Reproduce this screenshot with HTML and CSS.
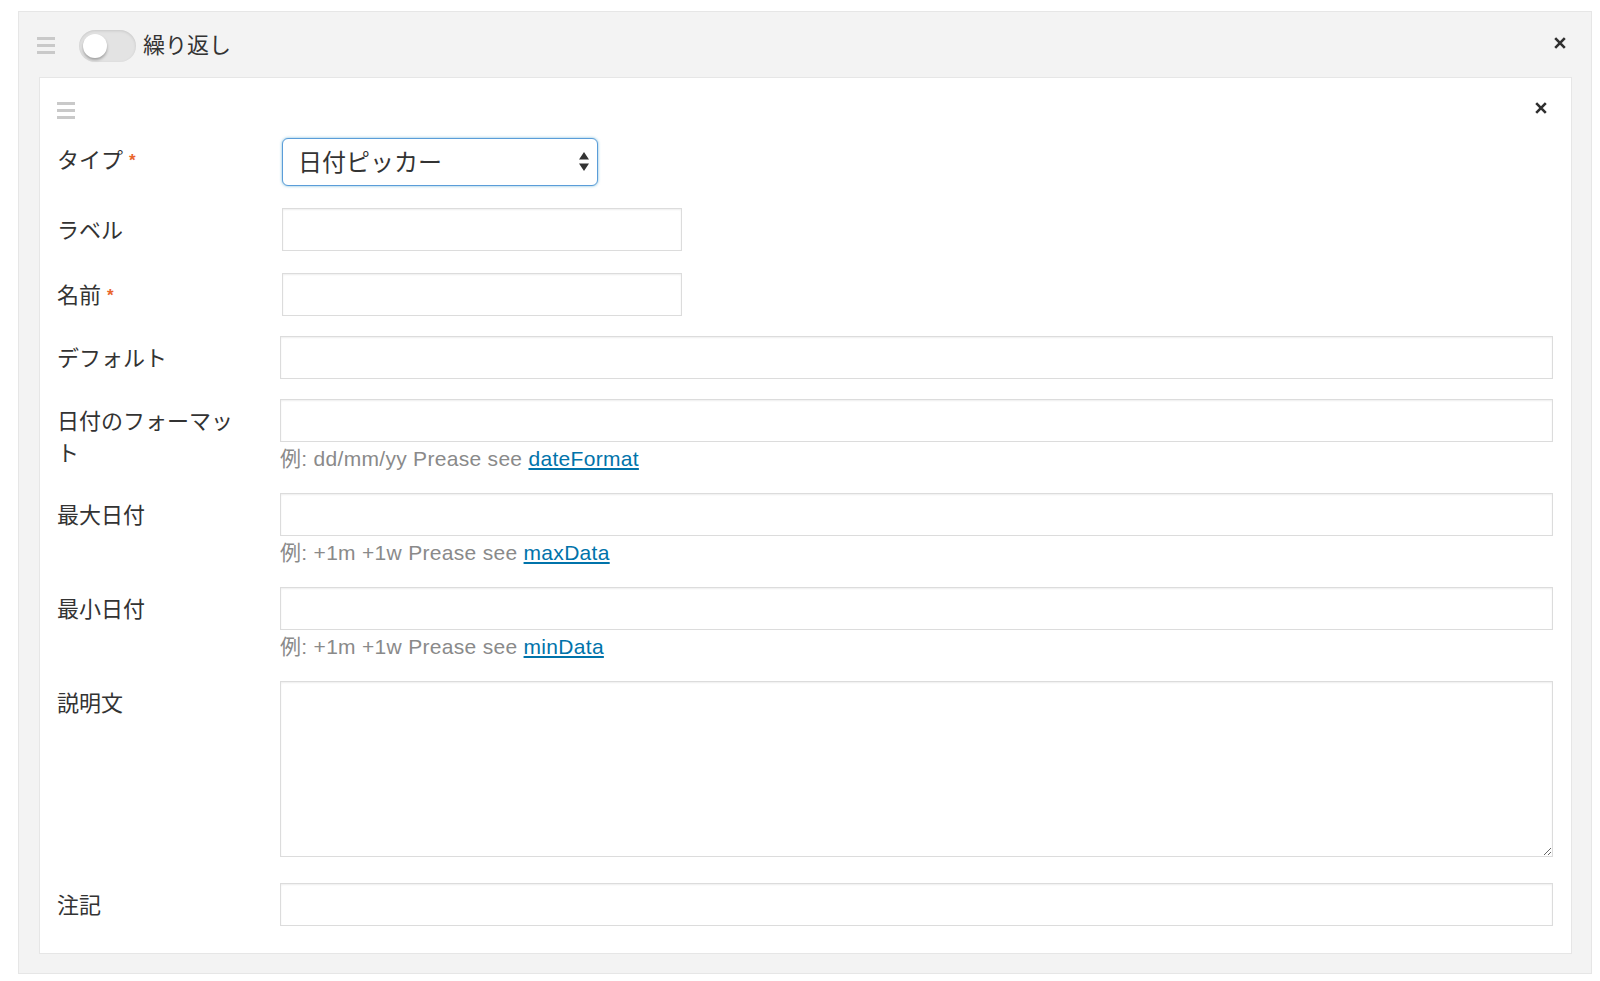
FILE: index.html
```html
<!DOCTYPE html>
<html lang="ja">
<head>
<meta charset="utf-8">
<title>繰り返し</title>
<link rel="stylesheet" href="styles.css">
</head>
<body>
<div class="repeater">
  <div class="repeater-head">
    <svg class="handle" viewBox="0 0 18 17" width="18" height="17"><rect x="0" y="0" width="18" height="3"/><rect x="0" y="7" width="18" height="3"/><rect x="0" y="14" width="18" height="3"/></svg>
    <span class="switch"><span class="switch-knob"></span></span>
    <span class="repeater-title">繰り返し</span>
    <button class="close" type="button"><svg viewBox="0 0 12 12" width="12" height="12"><path d="M1.2 1.2 L10.8 10.8 M10.8 1.2 L1.2 10.8"/></svg></button>
  </div>
  <div class="field">
    <div class="field-head">
      <svg class="handle handle--inner" viewBox="0 0 18 17" width="18" height="17"><rect x="0" y="0" width="18" height="3"/><rect x="0" y="7" width="18" height="3"/><rect x="0" y="14" width="18" height="3"/></svg>
      <button class="close" type="button"><svg viewBox="0 0 12 12" width="12" height="12"><path d="M1.2 1.2 L10.8 10.8 M10.8 1.2 L1.2 10.8"/></svg></button>
    </div>
    <div class="rows">
      <div class="row">
        <div class="row-label">タイプ<span class="req">*</span></div>
        <div class="row-control">
          <div class="select-wrap">
            <select class="select"><option>日付ピッカー</option></select>
            <svg class="select-arrows" viewBox="0 0 10 20" width="10" height="20"><path d="M5 0 L10 7.5 L0 7.5 Z M0 11.5 L10 11.5 L5 19 Z"/></svg>
          </div>
        </div>
      </div>
      <div class="row row--short">
        <div class="row-label">ラベル</div>
        <div class="row-control"><input class="input input--short" type="text"></div>
      </div>
      <div class="row row--short">
        <div class="row-label">名前<span class="req">*</span></div>
        <div class="row-control"><input class="input input--short" type="text"></div>
      </div>
      <div class="row">
        <div class="row-label">デフォルト</div>
        <div class="row-control"><input class="input" type="text"></div>
      </div>
      <div class="row">
        <div class="row-label">日付のフォーマット</div>
        <div class="row-control">
          <input class="input" type="text">
          <p class="help">例: dd/mm/yy Prease see <a href="#">dateFormat</a></p>
        </div>
      </div>
      <div class="row">
        <div class="row-label">最大日付</div>
        <div class="row-control">
          <input class="input" type="text">
          <p class="help">例: +1m +1w Prease see <a href="#">maxData</a></p>
        </div>
      </div>
      <div class="row">
        <div class="row-label">最小日付</div>
        <div class="row-control">
          <input class="input" type="text">
          <p class="help">例: +1m +1w Prease see <a href="#">minData</a></p>
        </div>
      </div>
      <div class="row">
        <div class="row-label">説明文</div>
        <div class="row-control"><textarea class="input textarea"></textarea></div>
      </div>
      <div class="row row--note">
        <div class="row-label">注記</div>
        <div class="row-control"><input class="input" type="text"></div>
      </div>
    </div>
  </div>
</div>
</body>
</html>
```
FILE: styles.css
```css
* { box-sizing: border-box; }

body {
  margin: 0;
  background: #fff;
  font-family: "Liberation Sans", "Noto Sans CJK JP", sans-serif;
  color: #333;
}

.repeater {
  width: 1574px;
  margin: 11px 0 0 18px;
  background: #f3f3f3;
  border: 1px solid #e6e6e6;
  padding: 0 19px 19px 20px;
}

.repeater-head {
  display: flex;
  align-items: center;
  height: 65px;
  margin-left: -2px;
  padding-top: 2px;
}

.handle {
  display: block;
  flex: none;
  fill: #c9c9c9;
}

.switch {
  position: relative;
  flex: none;
  margin-left: 24px;
  width: 57px;
  height: 32px;
  border-radius: 16px;
  background: #e3e3e3;
  box-shadow: inset 0 1px 3px rgba(0, 0, 0, 0.12);
}

.switch-knob {
  position: absolute;
  left: 4px;
  top: 4px;
  width: 24px;
  height: 24px;
  border-radius: 50%;
  background: #fff;
  box-shadow: 0 2px 3px rgba(0, 0, 0, 0.3);
}

.repeater-title {
  margin-left: 7px;
  font-size: 22px;
  line-height: 32px;
  color: #333;
}

.close {
  margin-left: auto;
  width: 24px;
  height: 24px;
  padding: 0;
  border: 0;
  background: none;
  display: flex;
  align-items: center;
  justify-content: center;
}

.repeater-head .close {
  margin-top: -6px;
}

.close svg {
  stroke: #2f2f2f;
  stroke-width: 2.6;
  fill: none;
}

.field {
  background: #fff;
  border: 1px solid #e6e6e6;
  padding: 0 18px 27px 17px;
}

.field-head {
  display: flex;
  align-items: center;
  justify-content: space-between;
  height: 60px;
}

.handle--inner {
  margin-top: 5px;
}

.field-head .close {
  margin-top: -1px;
}

.rows {
  display: flex;
  flex-direction: column;
  gap: 20px;
}

.row {
  display: grid;
  grid-template-columns: 190px 1fr;
  column-gap: 33px;
}

.row--short {
  margin-top: 2px;
}

.row--note {
  margin-top: 6px;
}

.row-label {
  font-size: 22px;
  line-height: 32px;
  padding-top: 7px;
  color: #333;
}

.req {
  margin-left: 6px;
  font-size: 17px;
  font-weight: bold;
  color: #e9652d;
  vertical-align: 2px;
}

.row-control {
  min-width: 0;
}

.input {
  display: block;
  width: 100%;
  height: 43px;
  margin: 0;
  padding: 0 10px;
  border: 1px solid #dcdcdc;
  border-radius: 0;
  background: #fff;
  box-shadow: inset 0 1px 2px rgba(0, 0, 0, 0.07);
  font-family: inherit;
  font-size: 20px;
  color: #333;
  outline: none;
}

.input--short {
  width: 400px;
  margin-left: 2px;
}

.textarea {
  height: 176px;
  padding: 8px 10px;
}

.select-wrap {
  position: relative;
  width: 316px;
  margin-left: 2px;
}

.select {
  -webkit-appearance: none;
  appearance: none;
  display: block;
  width: 100%;
  height: 48px;
  margin: 0;
  padding: 0 40px 0 15px;
  border: 1px solid #5b9dd9;
  border-radius: 6px;
  background: #fff;
  box-shadow: 0 0 3px rgba(30, 140, 190, 0.6);
  font-family: inherit;
  font-size: 24px;
  color: #333;
  outline: none;
}

.select-arrows {
  position: absolute;
  right: 9px;
  top: 14px;
  fill: #333;
  pointer-events: none;
}

.help {
  margin: 0;
  padding-top: 2px;
  font-size: 21px;
  line-height: 29px;
  letter-spacing: 0.3px;
  color: #8a8a8a;
}

.help a {
  color: #0073aa;
  text-decoration: underline;
}
```
